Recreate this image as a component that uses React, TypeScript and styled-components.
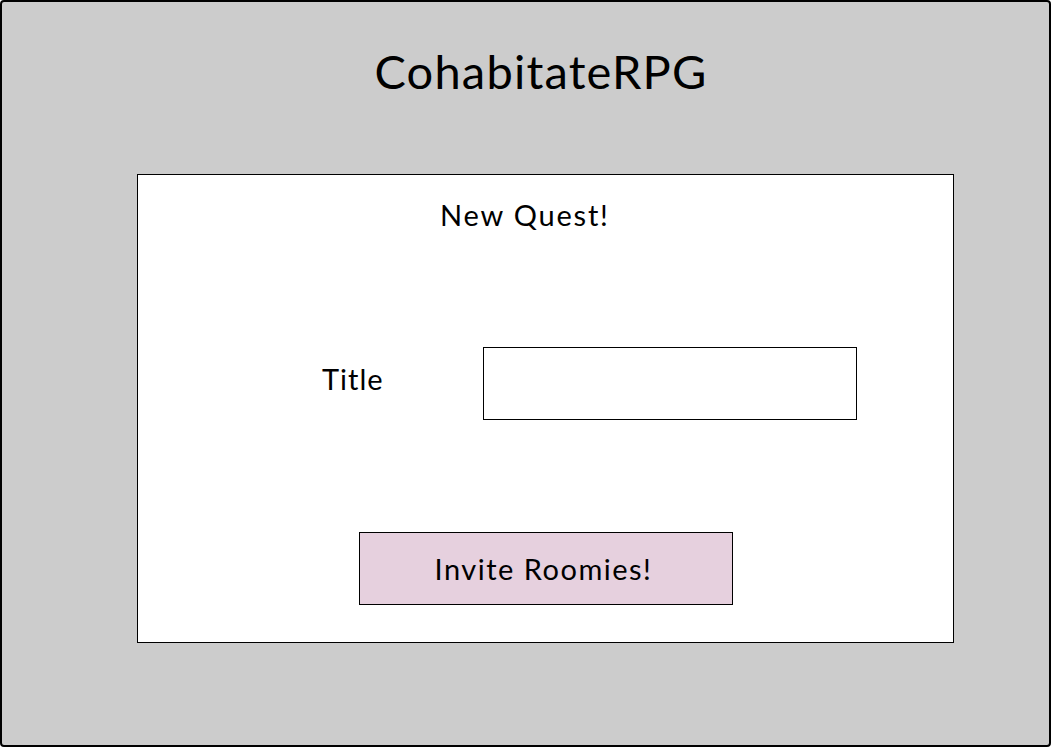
import React from "react";
import styled, { createGlobalStyle } from "styled-components";

const Global = createGlobalStyle`
  html, body { margin: 0; padding: 0; }
  body { font-family: Lato, "Noto Sans", sans-serif; color: #000; }
  * { box-sizing: border-box; }
`;

const Frame = styled.div`
  width: 1051px;
  height: 747px;
  background: #cccccc;
  border: 2px solid #000;
  border-radius: 4px;
  display: flex;
  flex-direction: column;
`;

const AppTitle = styled.h1`
  margin: 0;
  padding: 39px 0 0 31px;
  height: 172px;
  font-size: 47px;
  font-weight: 400;
  letter-spacing: 1.2px;
  line-height: 60px;
  text-align: center;
`;

const Card = styled.div`
  margin-left: 135px;
  width: 817px;
  height: 469px;
  background: #fff;
  border: 1px solid #000;
  display: flex;
  flex-direction: column;
`;

const CardHeading = styled.div`
  padding: 20px 0 0 0;
  margin-left: 302px;
  font-size: 29px;
  letter-spacing: 1.8px;
  line-height: 40px;
  height: 172px;
`;

const FieldRow = styled.div`
  display: flex;
  height: 185px;
  align-items: flex-start;
`;

const Label = styled.label`
  width: 345px;
  padding-left: 184px;
  padding-top: 12px;
  font-size: 29px;
  letter-spacing: 1px;
  line-height: 40px;
`;

const Input = styled.input`
  width: 374px;
  height: 73px;
  border: 1px solid #000;
  border-radius: 0;
  background: #fff;
  outline: none;
  padding: 0 10px;
  font: inherit;
`;

const ButtonRow = styled.div`
  padding-left: 221px;
`;

const Button = styled.button`
  width: 374px;
  height: 73px;
  background: #e6d0de;
  border: 1px solid #000;
  border-radius: 0;
  font-family: inherit;
  font-size: 29px;
  letter-spacing: 1.5px;
  color: #000;
  padding: 0 5px 0 0;
  cursor: pointer;
`;

export default function App() {
  return (
    <>
      <Global />
      <Frame>
        <AppTitle>CohabitateRPG</AppTitle>
        <Card>
          <CardHeading>New Quest!</CardHeading>
          <FieldRow>
            <Label htmlFor="title">Title</Label>
            <Input id="title" type="text" />
          </FieldRow>
          <ButtonRow>
            <Button>Invite Roomies!</Button>
          </ButtonRow>
        </Card>
      </Frame>
    </>
  );
}
